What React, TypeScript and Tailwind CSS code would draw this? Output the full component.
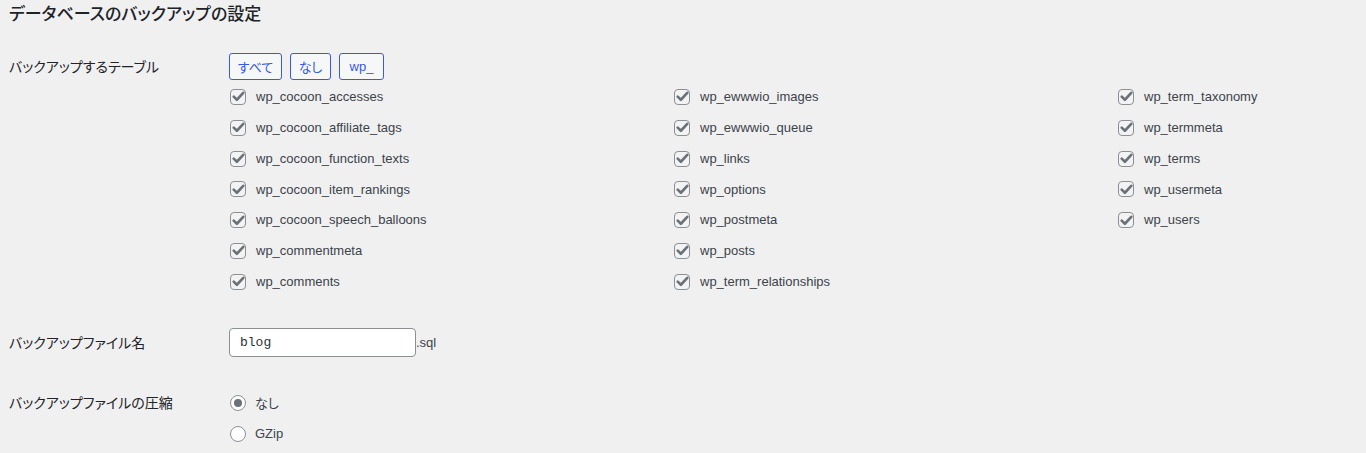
import React from "react";

const jp = "font-['Noto_Sans_CJK_JP',sans-serif] [font-feature-settings:'palt']";
const latin = "font-['Liberation_Sans','Noto_Sans_CJK_JP',sans-serif]";

const columns: string[][] = [
    [
        "wp_cocoon_accesses",
        "wp_cocoon_affiliate_tags",
        "wp_cocoon_function_texts",
        "wp_cocoon_item_rankings",
        "wp_cocoon_speech_balloons",
        "wp_commentmeta",
        "wp_comments",
    ],
    [
        "wp_ewwwio_images",
        "wp_ewwwio_queue",
        "wp_links",
        "wp_options",
        "wp_postmeta",
        "wp_posts",
        "wp_term_relationships",
    ],
    ["wp_term_taxonomy", "wp_termmeta", "wp_terms", "wp_usermeta", "wp_users"],
];

function CheckBox() {
    return (
        <span className="flex h-4 w-4 shrink-0 items-center justify-center rounded-[4px] border border-[#8c8f94] bg-[#f3f3f3]">
            <svg width="13" height="13" viewBox="0 0 12 12" fill="none">
                <path
                    d="M1.6 6.1 L4.5 9 L10.4 2.6"
                    stroke="#6b7178"
                    strokeWidth="2.4"
                    strokeLinecap="round"
                    strokeLinejoin="round"
                />
            </svg>
        </span>
    );
}

function Radio({ checked }: { checked?: boolean }) {
    return (
        <span className="flex h-4 w-4 shrink-0 items-center justify-center rounded-full border border-[#8c8f94] bg-white">
            {checked && <span className="h-2 w-2 rounded-full bg-[#6b7178]" />}
        </span>
    );
}

function Label({ children, className = "" }: { children: React.ReactNode; className?: string }) {
    return (
        <div className={`w-[220px] shrink-0 text-[14px] font-normal text-[#1d2327] ${jp} ${className}`}>
            {children}
        </div>
    );
}

export default function App() {
    return (
        <div className="min-h-[453px] w-full overflow-hidden bg-[#f0f0f1] pl-[9px] text-[#3c434a]">
            <h2 className={`h-[26px] text-[17px] font-medium leading-[26px] text-[#1d2327] ${jp}`}>
                データベースのバックアップの設定
            </h2>

            {/* tables */}
            <div className="flex pt-[27px]">
                <Label className="pt-[3px] leading-[20px]">バックアップするテーブル</Label>
                <div className="flex-1">
                    <div className="flex gap-2">
                        <button className={`h-[27px] w-[53px] rounded-[3px] border border-[#3858e9] bg-[#f6f7f7] text-[13px] text-[#3858e9] ${jp}`}>
                            すべて
                        </button>
                        <button className={`h-[27px] w-[41px] rounded-[3px] border border-[#3858e9] bg-[#f6f7f7] text-[13px] text-[#3858e9] ${jp}`}>
                            なし
                        </button>
                        <button className={`h-[27px] w-[45px] rounded-[3px] border border-[#3858e9] bg-[#f6f7f7] text-[13px] text-[#3858e9] ${latin}`}>
                            wp_
                        </button>
                    </div>
                    <div className="mt-[1.6px] grid grid-cols-[444px_444px_1fr]">
                        {columns.map((col, i) => (
                            <div key={i}>
                                {col.map((name) => (
                                    <div key={name} className="flex h-[30.8px] items-center gap-[10px] pl-px">
                                        <CheckBox />
                                        <span className={`text-[13px] ${latin}`}>{name}</span>
                                    </div>
                                ))}
                            </div>
                        ))}
                    </div>
                </div>
            </div>

            {/* file name */}
            <div className="flex pt-[30.6px]">
                <Label className="leading-[29px]">バックアップファイル名</Label>
                <div className="flex items-center">
                    <input
                        readOnly
                        value="blog"
                        className="h-[29px] w-[187px] rounded-[4px] border border-[#8c8f94] bg-white pl-[10px] font-['Liberation_Mono',monospace] text-[13px] text-[#2c3338] outline-none"
                    />
                    <span className={`text-[13px] ${latin}`}>.sql</span>
                </div>
            </div>

            {/* compression */}
            <div className="flex pt-[30.5px]">
                <Label className="leading-[31px]">バックアップファイルの圧縮</Label>
                <div>
                    <div className="flex h-[31px] items-center gap-[9px] pl-px">
                        <Radio checked />
                        <span className={`text-[13px] ${jp}`}>なし</span>
                    </div>
                    <div className="flex h-[31px] items-center gap-[9px] pl-px">
                        <Radio />
                        <span className={`text-[13px] ${latin}`}>GZip</span>
                    </div>
                </div>
            </div>
        </div>
    );
}
